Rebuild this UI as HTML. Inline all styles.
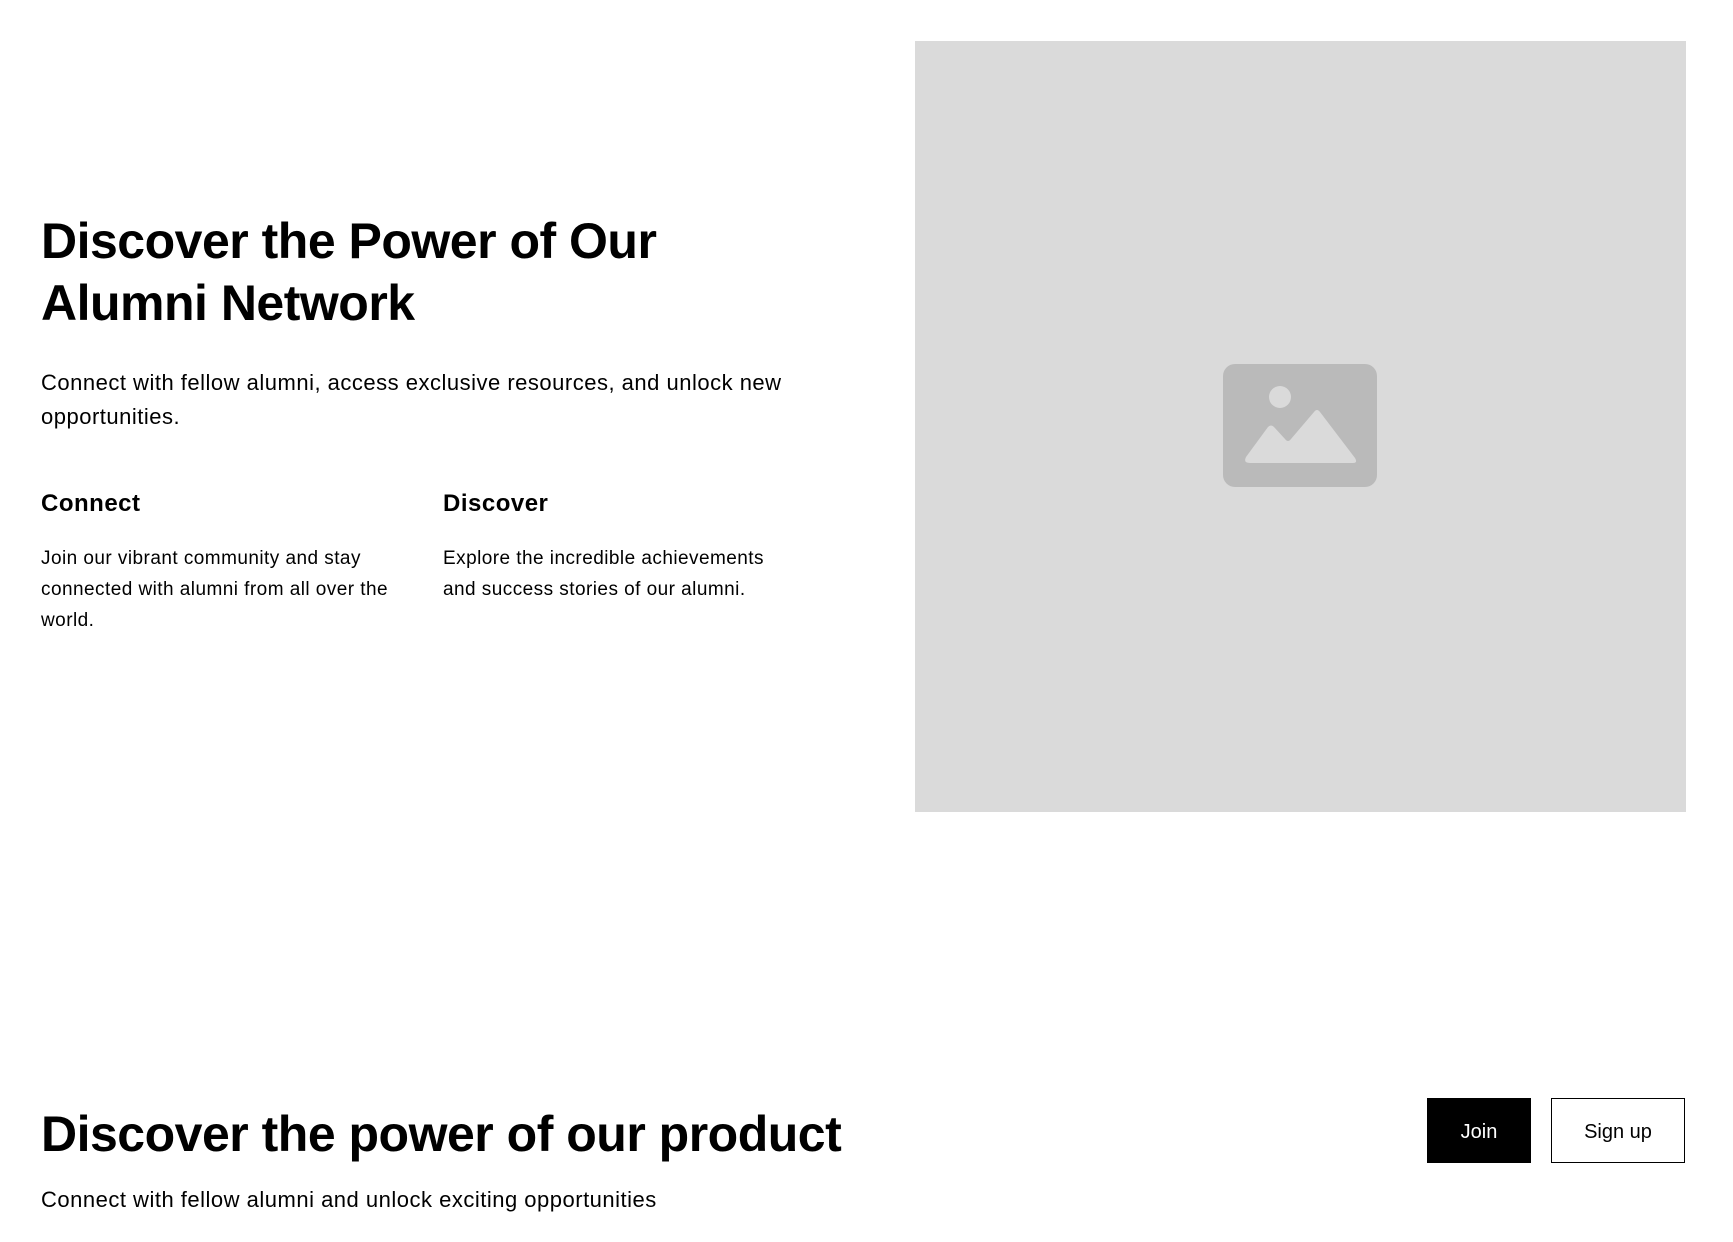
<!DOCTYPE html>
<html><head><meta charset="utf-8"><style>
*{margin:0;padding:0;box-sizing:border-box}
body{width:1733px;height:1242px;background:#fff;font-family:"Liberation Sans",sans-serif;color:#000;position:relative;overflow:hidden}
.a{position:absolute}
h1{font-size:50px;font-weight:bold;line-height:62px;letter-spacing:-0.5px}
.p{font-size:22px;line-height:34px;letter-spacing:0.5px}
h3{font-size:24px;font-weight:bold;letter-spacing:0.5px}
.b{font-size:19px;line-height:31px;letter-spacing:0.45px}
</style></head><body>
<h1 class="a" style="left:41px;top:210px;width:760px">Discover the Power of Our<br>Alumni Network</h1>
<div class="a p" style="left:41px;top:366px;width:800px">Connect with fellow alumni, access exclusive resources, and unlock new opportunities.</div>
<h3 class="a" style="left:41px;top:490px">Connect</h3>
<h3 class="a" style="left:443px;top:490px">Discover</h3>
<div class="a b" style="left:41px;top:543px;width:380px">Join our vibrant community and stay connected with alumni from all over the world.</div>
<div class="a b" style="left:443px;top:543px;width:340px">Explore the incredible achievements and success stories of our alumni.</div>
<div class="a" style="left:915px;top:41px;width:771px;height:771px;background:#dadada"></div>
<svg class="a" style="left:0;top:0" width="1733" height="1242">
<rect x="1223" y="364" width="154" height="123" rx="12" fill="#bababa"/>
<circle cx="1280" cy="397" r="11" fill="#dadada"/>
<path d="M1250 463 L1353 463 Q1358 463 1355 458 L1320 412 Q1317 408 1314 412 L1291 439 Q1288 443 1285 439 L1274 427 Q1271 424 1268 427 L1246 457 Q1243 463 1250 463Z" fill="#dadada"/>
</svg>
<h1 class="a" style="left:41px;top:1103px;font-size:50px;white-space:nowrap">Discover the power of our product</h1>
<div class="a p" style="left:41px;top:1183px;white-space:nowrap">Connect with fellow alumni and unlock exciting opportunities</div>
<div class="a" style="left:1427px;top:1098px;width:104px;height:65px;background:#000;color:#fff;font-size:20px;display:flex;align-items:center;justify-content:center;padding-top:4px">Join</div>
<div class="a" style="left:1551px;top:1098px;width:134px;height:65px;border:1.5px solid #000;font-size:20px;display:flex;align-items:center;justify-content:center;padding-top:4px">Sign up</div>
</body></html>
